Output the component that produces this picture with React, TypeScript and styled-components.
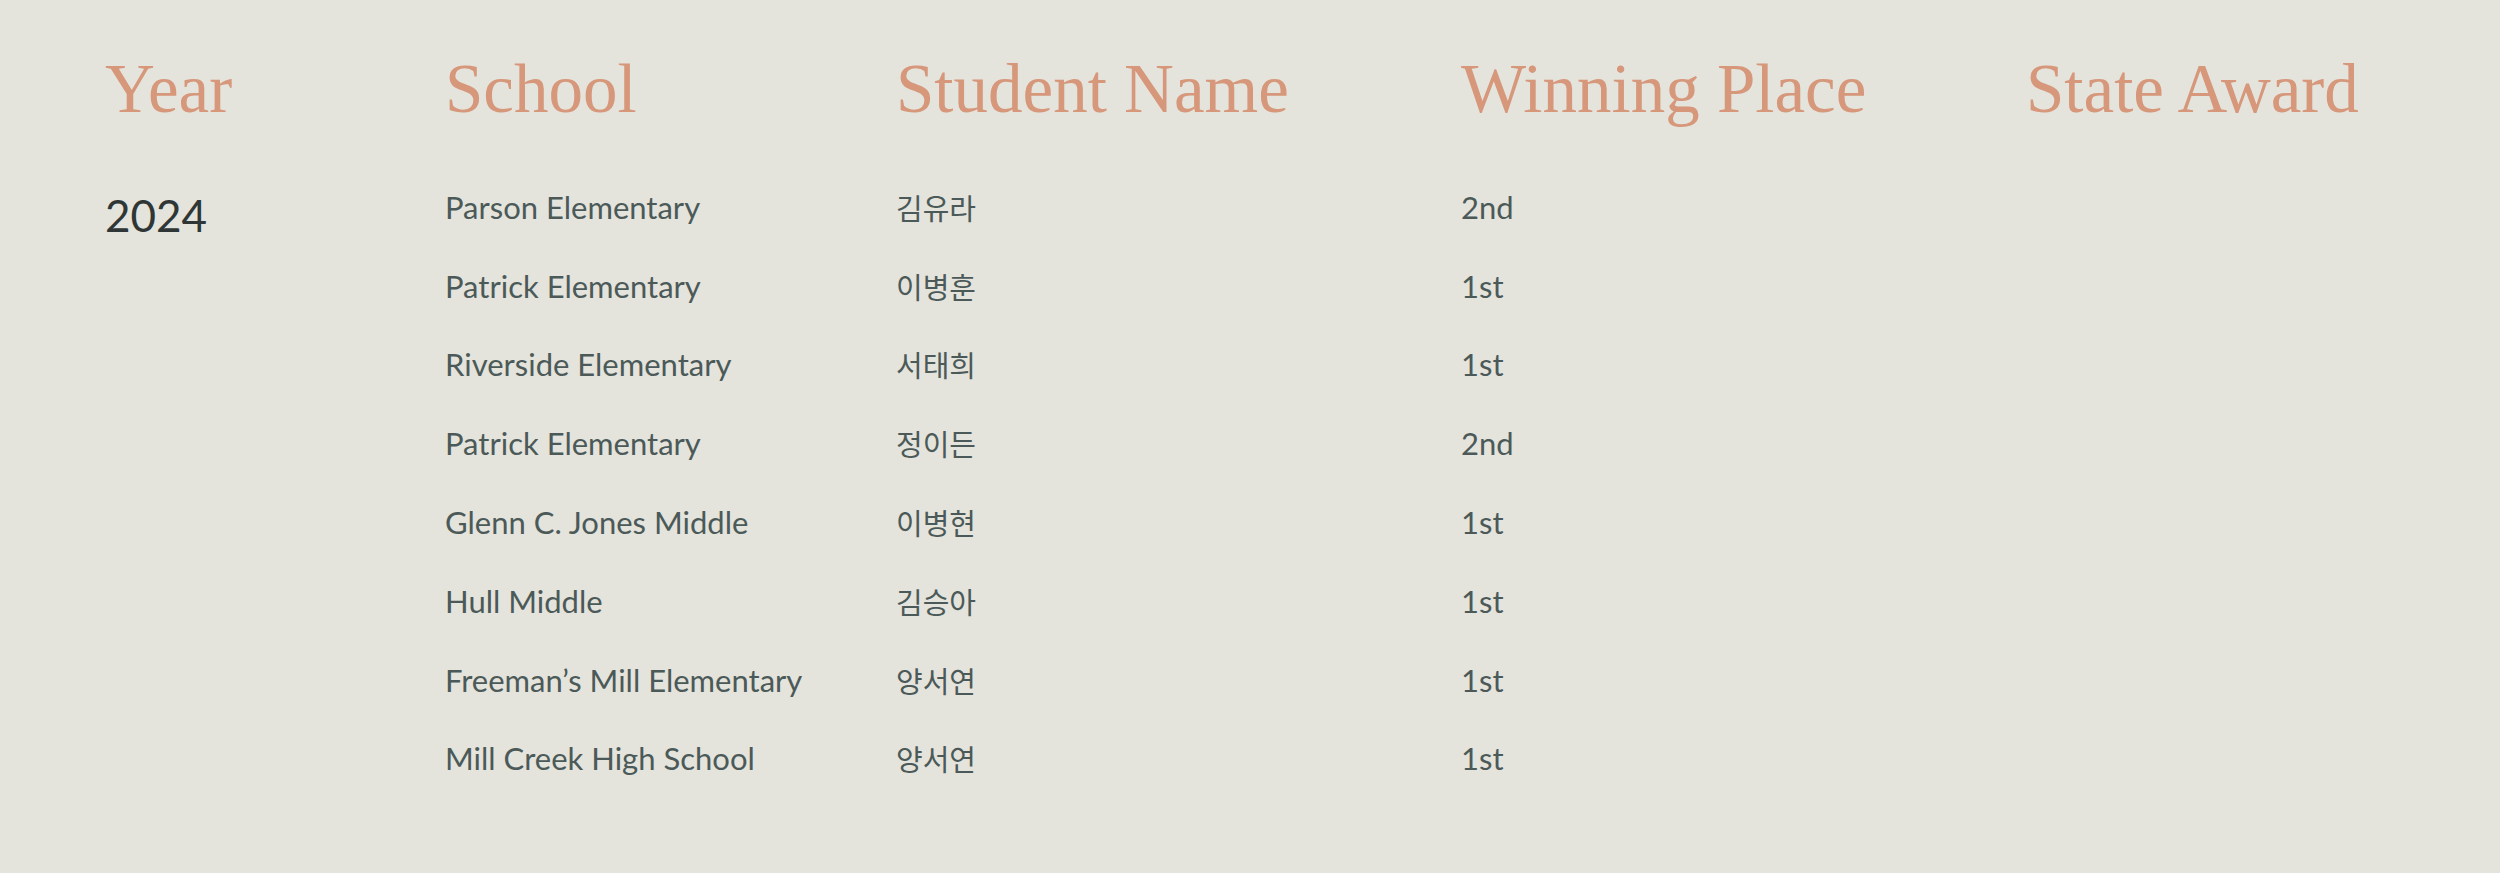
import React from "react";
import styled, { createGlobalStyle } from "styled-components";

const Global = createGlobalStyle`
  html, body { margin: 0; padding: 0; background: #e4e3dc; }
  body { font-family: Lato, "Noto Sans CJK KR", sans-serif; }
`;

const Page = styled.div`
  background: #e4e3dc;
  min-height: 873px;
  box-sizing: border-box;
  padding: 48px 0 0 105px;
`;

const Grid = styled.div`
  display: grid;
  grid-template-columns: 340px 451px 565px 565px 1fr;
`;

const Heading = styled.div`
  font-family: "Liberation Serif", "Times New Roman", serif;
  font-size: 69px;
  line-height: 1.2;
  color: #d6977a;
  font-weight: 400;
  white-space: nowrap;
`;

const Body = styled.div`
  display: grid;
  grid-template-columns: 340px 451px 565px 565px 1fr;
  margin-top: 58px;
`;

const YearCell = styled.div`
  font-family: Lato, sans-serif;
  font-size: 44px;
  line-height: 44px;
  color: #2f3636;
  grid-row: 1 / span 8;
  grid-column: 1;
  align-self: start;
  padding-top: 4px;
`;

const Cell = styled.div<{ $col: number; $korean?: boolean }>`
  grid-column: ${(p) => p.$col};
  font-family: ${(p) =>
    p.$korean
      ? '"Noto Sans CJK KR", Lato, sans-serif'
      : 'Lato, "Noto Sans CJK KR", sans-serif'};
  font-size: ${(p) => (p.$korean ? "29px" : "31px")};
  line-height: 36px;
  height: 78.8px;
  color: #4b5a58;
  white-space: nowrap;
`;

const rows = [
  ["Parson Elementary", "김유라", "2nd"],
  ["Patrick Elementary", "이병훈", "1st"],
  ["Riverside Elementary", "서태희", "1st"],
  ["Patrick Elementary", "정이든", "2nd"],
  ["Glenn C. Jones Middle", "이병현", "1st"],
  ["Hull Middle", "김승아", "1st"],
  ["Freeman’s Mill Elementary", "양서연", "1st"],
  ["Mill Creek High School", "양서연", "1st"],
];

export default function App() {
  return (
    <Page>
      <Global />
      <Grid>
        <Heading>Year</Heading>
        <Heading>School</Heading>
        <Heading>Student Name</Heading>
        <Heading>Winning Place</Heading>
        <Heading>State Award</Heading>
      </Grid>
      <Body>
        <YearCell>2024</YearCell>
        {rows.map(([school, name, place], i) => (
          <React.Fragment key={i}>
            <Cell $col={2} style={{ gridRow: i + 1 }}>{school}</Cell>
            <Cell $col={3} $korean style={{ gridRow: i + 1 }}>{name}</Cell>
            <Cell $col={4} style={{ gridRow: i + 1 }}>{place}</Cell>
            <Cell $col={5} style={{ gridRow: i + 1 }} />
          </React.Fragment>
        ))}
      </Body>
    </Page>
  );
}
